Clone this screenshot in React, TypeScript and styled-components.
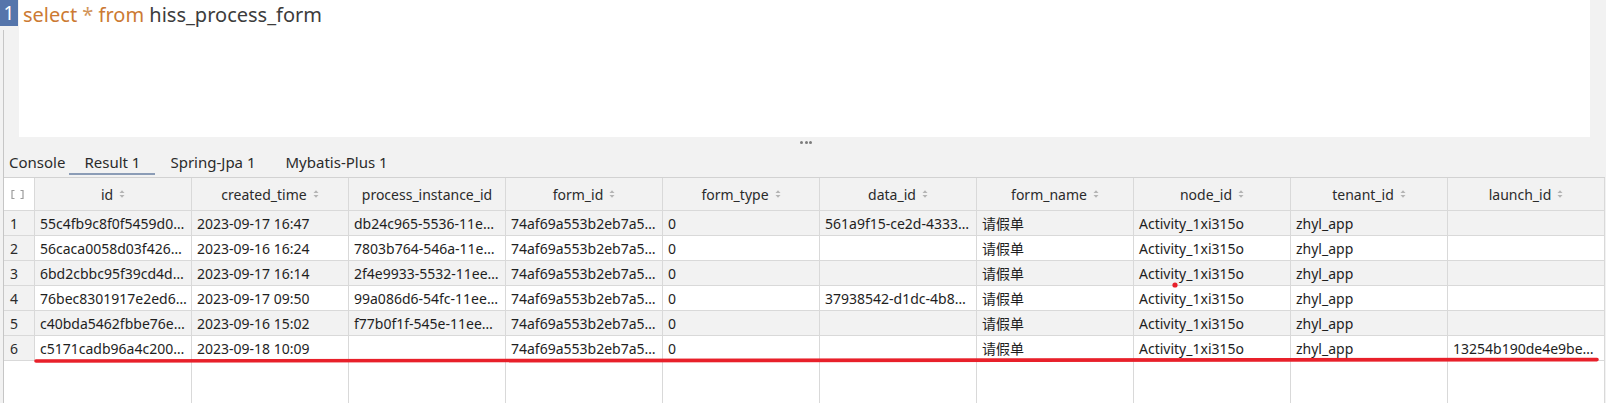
import React from "react";
import styled, { createGlobalStyle } from "styled-components";

const GlobalStyle = createGlobalStyle`
  html, body { margin: 0; padding: 0; background: #f2f2f2; }
  body { font-family: "Noto Sans", "Noto Sans CJK SC", sans-serif; }
  * { box-sizing: border-box; }
`;

const Page = styled.div`
  position: relative;
  width: 1606px;
  height: 403px;
  overflow: hidden;
  background: #f2f2f2;
  display: flex;
  flex-direction: column;
`;

const Editor = styled.div`
  height: 137px;
  display: flex;
`;

const Gutter = styled.div`
  width: 19px;
  display: flex;
  flex-direction: column;
  background: #f2f2f2;
`;

const LineNo = styled.div`
  width: 18px;
  height: 26px;
  background: #5575ab;
  color: #ffffff;
  font-size: 19px;
  line-height: 26px;
  text-align: center;
`;

const GutterRest = styled.div`
  flex: 1;
  margin-left: 3px;
  margin-top: 4px;
  border-left: 1px solid #c6c6c6;
`;

const Code = styled.div`
  flex: 1;
  background: #ffffff;
  padding-left: 4px;
  font-size: 20px;
  line-height: 30px;
  color: #3c3c3c;
  white-space: pre;
`;

const Kw = styled.span<{ $soft?: boolean }>`
  color: ${(p) => (p.$soft ? "#d2955a" : "#cc7a33")};
`;

const EditorEdge = styled.div`
  width: 16px;
  background: #f2f2f2;
`;

const Lower = styled.div`
  flex: 1;
  margin-left: 3px;
  border-left: 1px solid #c6c6c6;
  display: flex;
  flex-direction: column;
`;

const Splitter = styled.div`
  height: 10px;
  display: flex;
  justify-content: center;
  align-items: center;
  gap: 1.5px;
  padding-left: 2px;
`;

const Dot = styled.span`
  width: 3px;
  height: 3px;
  border-radius: 50%;
  background: #7c7c7c;
`;

const TabBar = styled.div`
  height: 30px;
  display: flex;
  align-items: flex-start;
`;

const Tab = styled.div<{ $active?: boolean; $first?: boolean }>`
  height: 28px;
  padding: 5px ${(p) => (p.$first ? "4px" : "15px")} 0 ${(p) => (p.$first ? "5px" : "15px")};
  border-bottom: 2px solid ${(p) => (p.$active ? "#8b9cb6" : "transparent")};
  font-size: 15px;
  line-height: 21px;
  color: #2b2b2b;
  white-space: nowrap;
`;

const Table = styled.div`
  flex: 1;
  display: grid;
  grid-template-columns: 31px repeat(10, 1fr);
  grid-template-rows: 33px repeat(6, 25px) 1fr;
  width: 1601px;
  border-top: 1px solid #d2d2d2;
  background: #ffffff;
  font-size: 14px;
  color: #1e1e1e;
`;

const CornerCell = styled.div`
  background: #ffffff;
  border-right: 1px solid #d9d9d9;
  border-bottom: 1px solid #d9d9d9;
  display: flex;
  align-items: center;
  justify-content: center;
  padding-right: 4px;
`;

const HeadCell = styled.div`
  background: #f2f2f2;
  border-right: 1px solid #d9d9d9;
  border-bottom: 1px solid #d9d9d9;
  display: flex;
  align-items: center;
  justify-content: center;
  gap: 6px;
  color: #2b2b2b;
  white-space: nowrap;
  overflow: hidden;
`;

const RowNum = styled.div`
  background: #f2f2f2;
  border-right: 1px solid #d9d9d9;
  border-bottom: 1px solid #d9d9d9;
  display: flex;
  align-items: center;
  padding-left: 6px;
  color: #2b2b2b;
`;

const Cell = styled.div<{ $odd: boolean }>`
  background: ${(p) => (p.$odd ? "#f2f2f2" : "#ffffff")};
  border-right: 1px solid #d9d9d9;
  border-bottom: 1px solid #d9d9d9;
  display: flex;
  align-items: center;
  padding-left: 5px;
  white-space: nowrap;
  overflow: hidden;
`;

const FillCell = styled.div<{ $edge?: boolean }>`
  background: #ffffff;
  border-right: ${(p) => (p.$edge ? "none" : "1px solid #d9d9d9")};
`;

const Overlay = styled.svg`
  position: absolute;
  left: 0;
  top: 0;
  pointer-events: none;
`;

const SortIcon = () => (
  <svg width="6" height="10" viewBox="0 0 6 10">
    <path d="M0.5 4 L3 1.2 L5.5 4 Z" fill="#b4b4b4" />
    <path d="M0.5 6 L3 8.8 L5.5 6 Z" fill="#b4b4b4" />
  </svg>
);

const BracketIcon = () => (
  <svg width="13" height="9" viewBox="0 0 13 9">
    <path d="M3.5 0.5 H1 V8.5 H3.5" fill="none" stroke="#9c9c9c" strokeWidth="1.2" />
    <path d="M9.5 0.5 H12 V8.5 H9.5" fill="none" stroke="#9c9c9c" strokeWidth="1.2" />
  </svg>
);

const headers = [
  "id",
  "created_time",
  "process_instance_id",
  "form_id",
  "form_type",
  "data_id",
  "form_name",
  "node_id",
  "tenant_id",
  "launch_id",
];

const rows: string[][] = [
  ["55c4fb9c8f0f5459d0…", "2023-09-17 16:47", "db24c965-5536-11e…", "74af69a553b2eb7a5…", "0", "561a9f15-ce2d-4333…", "请假单", "Activity_1xi315o", "zhyl_app", ""],
  ["56caca0058d03f426…", "2023-09-16 16:24", "7803b764-546a-11e…", "74af69a553b2eb7a5…", "0", "", "请假单", "Activity_1xi315o", "zhyl_app", ""],
  ["6bd2cbbc95f39cd4d…", "2023-09-17 16:14", "2f4e9933-5532-11ee…", "74af69a553b2eb7a5…", "0", "", "请假单", "Activity_1xi315o", "zhyl_app", ""],
  ["76bec8301917e2ed6…", "2023-09-17 09:50", "99a086d6-54fc-11ee…", "74af69a553b2eb7a5…", "0", "37938542-d1dc-4b8…", "请假单", "Activity_1xi315o", "zhyl_app", ""],
  ["c40bda5462fbbe76e…", "2023-09-16 15:02", "f77b0f1f-545e-11ee…", "74af69a553b2eb7a5…", "0", "", "请假单", "Activity_1xi315o", "zhyl_app", ""],
  ["c5171cadb96a4c200…", "2023-09-18 10:09", "", "74af69a553b2eb7a5…", "0", "", "请假单", "Activity_1xi315o", "zhyl_app", "13254b190de4e9be…"],
];

export default function App() {
  return (
    <>
      <GlobalStyle />
      <Page>
        <Editor>
          <Gutter>
            <LineNo>1</LineNo>
            <GutterRest />
          </Gutter>
          <Code>
            <Kw>select</Kw> <Kw $soft>*</Kw> <Kw>from</Kw> hiss_process_form
          </Code>
          <EditorEdge />
        </Editor>
        <Lower>
          <Splitter>
            <Dot />
            <Dot />
            <Dot />
          </Splitter>
          <TabBar>
            <Tab $first>Console</Tab>
            <Tab $active>Result 1</Tab>
            <Tab>Spring-Jpa 1</Tab>
            <Tab>Mybatis-Plus 1</Tab>
          </TabBar>
          <Table>
            <CornerCell>
              <BracketIcon />
            </CornerCell>
            {headers.map((h) => (
              <HeadCell key={h}>
                <span>{h}</span>
                {h !== "process_instance_id" && <SortIcon />}
              </HeadCell>
            ))}
            {rows.map((r, i) => (
              <React.Fragment key={i}>
                <RowNum>{i + 1}</RowNum>
                {r.map((v, j) => (
                  <Cell key={j} $odd={i % 2 === 0}>
                    {v}
                  </Cell>
                ))}
              </React.Fragment>
            ))}
            <FillCell $edge />
            {headers.map((h) => (
              <FillCell key={"f" + h} />
            ))}
          </Table>
        </Lower>
        <Overlay width="1606" height="403" viewBox="0 0 1606 403">
          <path
            d="M36 361 Q 800 359.6 1597 359.6"
            fill="none"
            stroke="#e8202a"
            strokeWidth="3.6"
            strokeLinecap="round"
          />
          <circle cx="1175" cy="285" r="2.6" fill="#e8202a" />
        </Overlay>
      </Page>
    </>
  );
}
